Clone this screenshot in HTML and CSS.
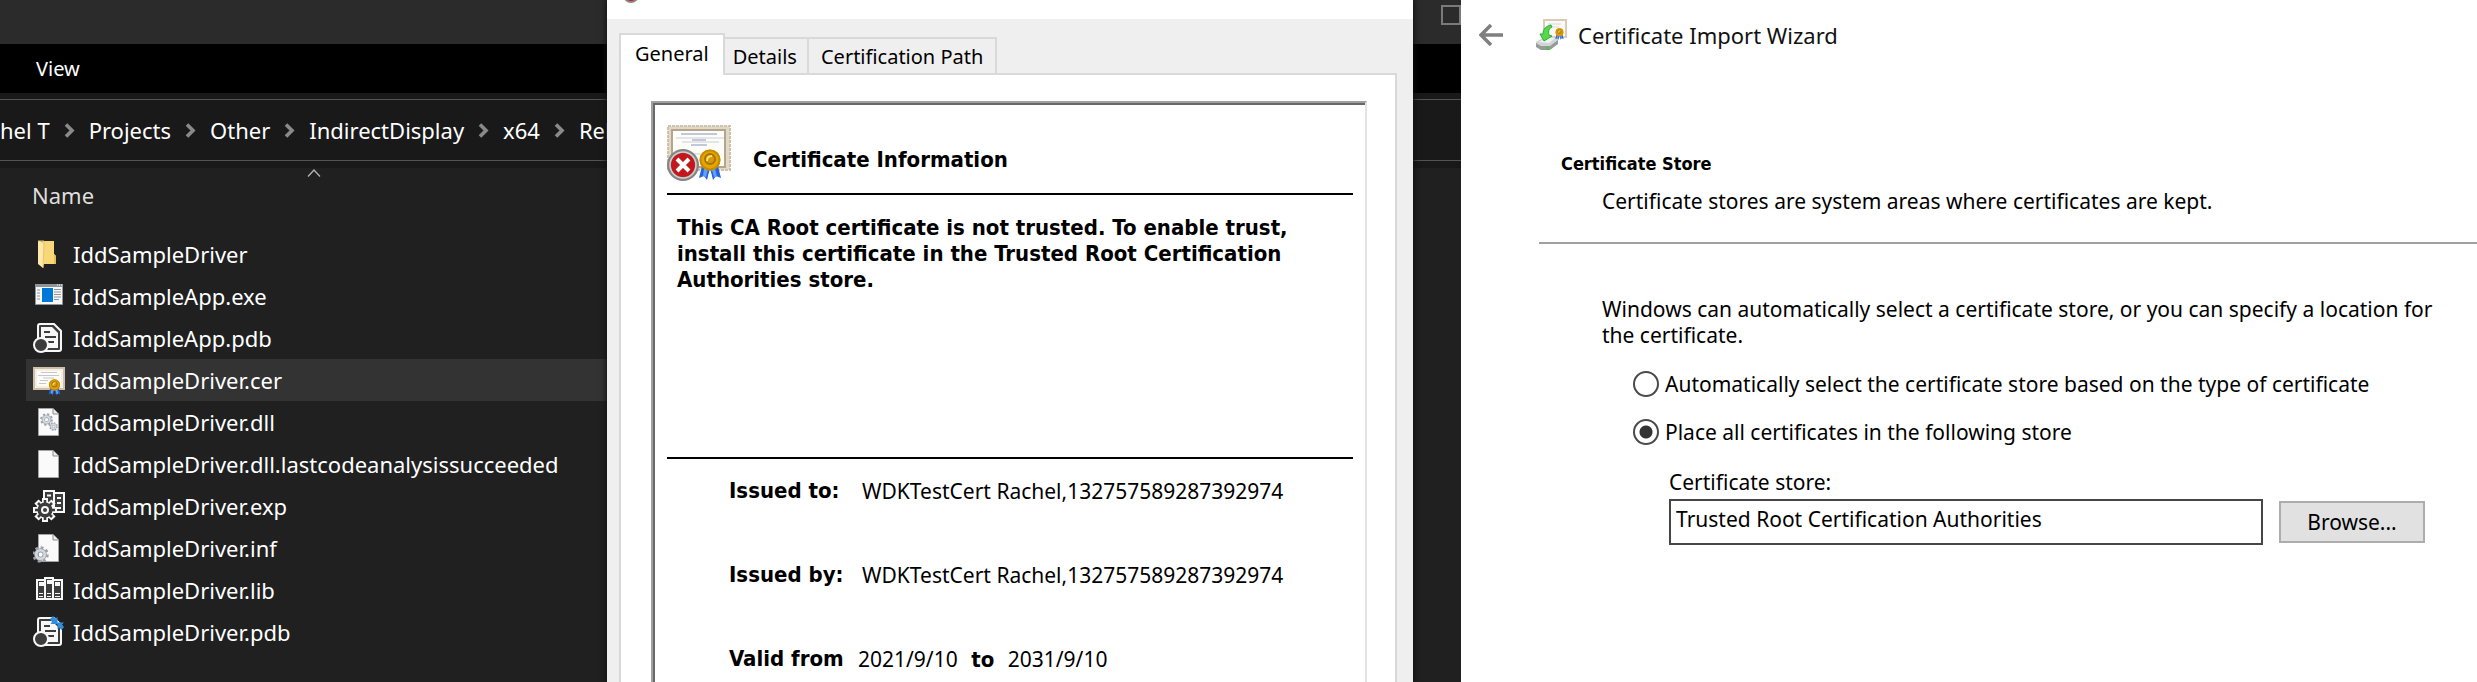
FILE: index.html
```html
<!DOCTYPE html>
<html lang="en">
<head>
<meta charset="utf-8">
<title>Certificate Import Wizard</title>
<link rel="stylesheet" href="styles.css">
</head>
<body>
<svg class="defs" aria-hidden="true">
  <defs>
    <symbol id="chevron" viewBox="0 0 11 15"><path d="M2 1.500l6 6-6 6" fill="none" stroke="#8a8a8a" stroke-width="3.600"/></symbol>
    <symbol id="ribbon-seal" viewBox="0 0 24 32">
      <path d="M4 17L1 29l5-2 3 4 3-12zM20 17l3 12-5-2-3 4-3-12z" fill="#2363dc"/>
      <path d="M6 20l-1 7 3 1 2-8zM17 19l2 9-3 0-2-7z" fill="#62a0f5"/>
      <circle cx="12" cy="11" r="10.500" fill="#e3a500"/>
      <circle cx="12" cy="11" r="9.500" fill="none" stroke="#c98a00" stroke-width="2"/>
      <circle cx="12" cy="10" r="5" fill="#d59a0c" stroke="#a87408" stroke-width="2"/>
      <path d="M9 12c0-3 2-5 5-5" fill="none" stroke="#ffdf70" stroke-width="2"/>
    </symbol>
    <symbol id="page" viewBox="0 0 32 32">
      <path d="M5.500 2.500H20l5.500 5.500v21.500h-20z" fill="#fafafa" stroke="#a3a3a3"/>
      <path d="M20 2.500V8h5.500" fill="#ededed" stroke="#8d8d8d"/>
    </symbol>
    <symbol id="cog" viewBox="0 0 20 20">
      <circle cx="10" cy="10" r="8" fill="none" stroke="#9ba2aa" stroke-width="3.500" stroke-dasharray="3.140 3.143"/>
      <circle cx="10" cy="10" r="5" fill="none" stroke="#9ba2aa" stroke-width="5"/>
      <circle cx="10" cy="10" r="5" fill="none" stroke="#d4d9e0" stroke-width="3"/>
    </symbol>
    <symbol id="pdb" viewBox="0 0 32 32">
      <path d="M7 2h14l7 7v18a2 2 0 0 1-2 2H5V4a2 2 0 0 1 2-2z" fill="#3c3c3c" stroke="#f7f7f7" stroke-width="2"/>
      <path d="M8 5h11l6 6v15H8z" fill="#f7f7f7"/>
      <path d="M11 10h6M12 15h11M15 20h6" stroke="#3c3c3c" stroke-width="2"/>
      <circle cx="8" cy="23" r="7" fill="#3c3c3c" stroke="#f7f7f7" stroke-width="2"/>
    </symbol>
  </defs>
</svg>

<main class="desktop">
  <section class="explorer" aria-label="File explorer">
    <header class="explorer-title">
      <div class="caption-box"><button class="maximize" type="button" aria-label="Maximize"></button></div>
    </header>
    <div class="menu"><button class="menu-item" type="button">View</button></div>
    <nav class="address" aria-label="Address">
      <a href="#">hel T</a><svg class="chevron"><use href="#chevron"/></svg>
      <a href="#">Projects</a><svg class="chevron"><use href="#chevron"/></svg>
      <a href="#">Other</a><svg class="chevron"><use href="#chevron"/></svg>
      <a href="#">IndirectDisplay</a><svg class="chevron"><use href="#chevron"/></svg>
      <a href="#">x64</a><svg class="chevron"><use href="#chevron"/></svg>
      <a href="#">Release</a>
    </nav>
    <div class="list-head">
      <svg class="sort" viewBox="0 0 14 8"><path d="M1 7.500L7 1l6 6.500" fill="none" stroke="#b4b4b4" stroke-width="1.300"/></svg>
      <span>Name</span>
    </div>
    <ul class="files">
      <li><svg viewBox="0 0 32 32"><path d="M9 3h12v13l2 2v8H10z" fill="#f7d778"/><path d="M21 16l2 2v8h-2z" fill="#e5bd55"/><path d="M5 3h3l3 4v18l-1 5-5-4z" fill="#ffe9a9"/><path d="M5 3h6v3l-1 24" fill="none" stroke="#e8c46a"/></svg>IddSampleDriver</li>
      <li><svg viewBox="0 0 32 32"><path d="M2.500 4.500h27v20h-27z" fill="#f7f7f7" stroke="#8d949a"/><path d="M2 4h28v3H2z" fill="#8d949a"/><path d="M24 5h1M26 5h1M28 5h1" stroke="#fff"/><path d="M9 8h11v14H9z" fill="#0078d7"/><path d="M4 10h3M4 13h3M4 16h3M4 19h3M21 9.500h7M21 12h7M21 14.500h7M21 17h7M21 19.500h5" stroke="#8d949a"/></svg>IddSampleApp.exe</li>
      <li><svg><use href="#pdb"/></svg>IddSampleApp.pdb</li>
      <li class="selected"><svg viewBox="0 0 32 32"><path d="M1 4h30v21H1z" fill="#fdfcf7" stroke="#cdbfa8" stroke-width="2"/><path d="M3 6h26v17H3z" fill="none" stroke="#ebe2d2"/><path d="M8 8.500h16M5 11.500h21M10 14h11M7 16.500h8M6 19.500h7" stroke="#c3c6cf"/><use href="#ribbon-seal" x="15" y="15" width="13" height="17"/></svg>IddSampleDriver.cer</li>
      <li><svg viewBox="0 0 32 32"><use href="#page"/><use href="#cog" x="7" y="7" width="13" height="13"/><use href="#cog" x="16" y="16" width="9" height="9"/></svg>IddSampleDriver.dll</li>
      <li><svg><use href="#page"/></svg>IddSampleDriver.dll.lastcodeanalysissucceeded</li>
      <li><svg viewBox="0 0 32 32"><path d="M11 1h10v20H11zM21 3h10v19H21z" fill="#3c3c3c" stroke="#f7f7f7" stroke-width="2"/><path d="M14 5.500h4M24 8h4M24 13h4M24 18h4" stroke="#f7f7f7" stroke-width="2"/>
        <circle cx="12" cy="20" r="9" fill="#f7f7f7"/><path d="M12 8v24M0 20h24M3.500 11.500l17 17M20.500 11.500l-17 17" stroke="#f7f7f7" stroke-width="6"/>
        <circle cx="12" cy="20" r="7.500" fill="#3c3c3c"/><path d="M12 10v20M2 20h20M5 13l14 14M19 13L5 27" stroke="#3c3c3c" stroke-width="2.500"/>
        <circle cx="12" cy="20" r="3" fill="#3c3c3c" stroke="#f7f7f7" stroke-width="2"/></svg>IddSampleDriver.exp</li>
      <li><svg viewBox="0 0 32 32"><use href="#page"/><use href="#cog" x="-1" y="14" width="17" height="17"/></svg>IddSampleDriver.inf</li>
      <li><svg viewBox="0 0 32 32"><path d="M4 6h8v19H4zM12 4h8v21h-8zM20 6h9v19h-9z" fill="#3c3c3c" stroke="#f7f7f7" stroke-width="2"/><path d="M6 10h5M14 8h5M22 10h5" stroke="#f7f7f7" stroke-width="4"/><path d="M6 19.500h4M14 19.500h4M22 19.500h5M6 22.500h4M14 22.500h4M22 22.500h5" stroke="#f7f7f7"/></svg>IddSampleDriver.lib</li>
      <li><svg viewBox="0 0 32 32"><use href="#pdb"/><path d="M17 3l3-3 2.500 2.500L24.500 1v7h-7L19 6zM24.500 6.500H31L29 8.500l2 2.500-2.500 3-2.500-2.500-1.500 1.500z" fill="#2f8ede"/></svg>IddSampleDriver.pdb</li>
    </ul>
  </section>

  <section class="cert" aria-label="Certificate">
    <header class="cert-title"><span class="title-icon"></span></header>
    <div class="cert-body">
      <div class="tabs" role="tablist">
        <button class="tab active" type="button" role="tab" aria-selected="true">General</button>
        <button class="tab" type="button" role="tab">Details</button>
        <button class="tab" type="button" role="tab">Certification Path</button>
      </div>
      <div class="pane">
        <div class="frame">
          <div class="info-head">
            <svg class="cert-icon" viewBox="0 0 64 56">
              <path d="M1 1h62v44H1z" fill="#e2d8c8" stroke="#cfc2ad" stroke-width="2" stroke-dasharray="3 1"/>
              <path d="M5 5h53v37H5z" fill="#fdfdf8" stroke="#b5a58e" stroke-width="2"/>
              <path d="M14 9h36M25 15h14M24 20h16" stroke="#c2c8dc" stroke-width="2"/>
              <path d="M9 13h48M15 17h37M20 29h32" stroke="#e4e5ea" stroke-width="2"/>
              <use href="#ribbon-seal" x="31" y="24" width="24" height="32"/>
              <circle cx="16" cy="40" r="14" fill="#c5161c" stroke="#858585" stroke-width="4"/>
              <circle cx="16" cy="40" r="13" fill="none" stroke="#cfcfcf" stroke-width="1.500"/>
              <path d="M10 34l12 12M22 34L10 46" stroke="#fff" stroke-width="4"/>
            </svg>
            <h1>Certificate Information</h1>
          </div>
          <p class="trust">This CA Root certificate is not trusted. To enable trust, install this certificate in the Trusted Root Certification Authorities store.</p>
          <dl class="facts">
            <div><dt>Issued to:</dt><dd>WDKTestCert Rachel,132757589287392974</dd></div>
            <div><dt>Issued by:</dt><dd>WDKTestCert Rachel,132757589287392974</dd></div>
            <div><dt>Valid from</dt><dd>2021/9/10 <b>to</b> 2031/9/10</dd></div>
          </dl>
        </div>
      </div>
    </div>
  </section>

  <section class="wizard" aria-label="Certificate Import Wizard">
    <header class="wizard-title">
      <button class="back" type="button" aria-label="Back"><svg viewBox="0 0 24 22"><path d="M2 11h22M12 1L2 11l10 10" fill="none" stroke="#7f7f7f" stroke-width="3.500"/></svg></button>
      <svg class="wizard-icon" viewBox="0 0 32 32">
        <path d="M9 1h22v17H9z" fill="#fbfaf5" stroke="#d8ccb9" stroke-width="2"/>
        <path d="M13 5h13M15 8h9" stroke="#d6d8df"/>
        <path d="M1 23l10-6h14l-3 7-9 6-9-1-3-3z" fill="#d3d5d4"/>
        <path d="M1 24l5 3h9l8-6v4l-8 6H6l-5-3z" fill="#969b99"/>
        <path d="M4 23l8-4h8l-6 5z" fill="#f1f3f2"/>
        <path d="M11 28h3v3h-3z" fill="#46c34a"/>
        <path d="M16 6c-5 1-8 4-8 9H5l4 7 8-5-3-1c-1-4 0-7 3-8z" fill="#54d84e" stroke="#2ead35"/>
        <use href="#ribbon-seal" x="20" y="9" width="9" height="12"/>
      </svg>
      <h2>Certificate Import Wizard</h2>
    </header>
    <div class="step">
      <h3>Certificate Store</h3>
      <p>Certificate stores are system areas where certificates are kept.</p>
    </div>
    <form class="choices">
      <p>Windows can automatically select a certificate store, or you can specify a location for the certificate.</p>
      <label class="option"><input type="radio" name="store"><span>Automatically select the certificate store based on the type of certificate</span></label>
      <label class="option"><input type="radio" name="store" checked><span>Place all certificates in the following store</span></label>
      <div class="store">
        <label for="store-name">Certificate store:</label>
        <div class="store-row">
          <input id="store-name" type="text" value="Trusted Root Certification Authorities">
          <button class="browse" type="button">Browse...</button>
        </div>
      </div>
    </form>
  </section>
</main>
</body>
</html>
```
FILE: styles.css
```css
* { box-sizing: border-box; margin: 0; padding: 0; }

body {
  font: 21px/26px "Noto Sans", "Open Sans", sans-serif;
  color: #000;
  background: #202020;
  overflow: hidden;
}

button, input { font: inherit; color: inherit; border: 0; border-radius: 0; background: none; }
ul { list-style: none; }
.defs { position: absolute; width: 0; height: 0; }

/* Windows overlap on one grid row */
.desktop {
  display: grid;
  grid-template-columns: 607fr 806fr 48fr 1016fr;
  height: 100vh;
  overflow: hidden;
}
.explorer, .cert, .wizard { grid-row: 1; min-width: 0; min-height: 0; }
.explorer { grid-column: 1 / -1; }
.cert { grid-column: 2; }
.wizard { grid-column: 4; }

/* Explorer */
.explorer { background: #202020; color: #fff; font-size: 22px; line-height: 42px; }
.explorer-title {
  display: grid;
  grid-template-columns: 1413fr 48fr 1016fr;
  height: 44px;
  background: #2b2b2b;
}
.caption-box { grid-column: 2; display: flex; justify-content: flex-end; padding-top: 5px; }
.maximize { width: 20px; height: 20px; border: 2px solid #7a7a7a; }
.menu { display: flex; align-items: center; height: 49px; padding-left: 36px; background: #000; font-size: 20px; }
.address {
  display: flex;
  align-items: center;
  gap: 14px;
  height: 75px;
  border-top: 6px solid #191919;
  border-bottom: 7px solid #191919;
  background: #191919;
  box-shadow: inset 0 1px #535353, inset 0 -1px #535353;
}
.address a { color: inherit; text-decoration: none; }
.chevron { flex: none; width: 11px; height: 15px; }
.list-head { display: flex; flex-direction: column; height: 65px; padding: 1px 0 0 32px; gap: 2px; color: #dedede; line-height: 32px; }
.sort { width: 14px; height: 8px; margin-left: 275px; }
.files { width: 50%; }
.files li { display: flex; align-items: center; gap: 8px; height: 42px; margin-left: 26px; padding-left: 7px; }
.files svg { flex: none; width: 32px; height: 32px; }
.files .selected { background: #333; }

/* Certificate dialog */
.cert { display: flex; flex-direction: column; background: #efefef; box-shadow: 0 0 6px 1px #111; overflow: hidden; }
.cert-title { flex: none; height: 19px; background: #fff; padding-left: 16px; overflow: hidden; }
.title-icon { display: block; width: 16px; height: 16px; margin-top: -13px; border: 2px solid #8a8a8a; border-radius: 50%; background: #d0141a; }
.cert-body { flex: 1; display: flex; flex-direction: column; padding: 14px 16px 0 12px; }
.tabs { display: flex; align-items: flex-end; font-size: 20px; }
.tab { height: 36px; padding: 2px 10px 0 8px; border: 2px solid #d9d9d9; border-bottom: 0; border-left: 0; background: #efefef; }
.tab:last-child { padding: 2px 12px 0 12px; }
.tab.active { height: 42px; margin-bottom: -2px; padding: 0 14px 2px 14px; border-left: 2px solid #d9d9d9; background: #fff; z-index: 1; }
.pane { flex: 1; padding: 26px 28px 0 30px; border: 2px solid #d9d9d9; border-bottom: 0; background: #fff; }
.frame {
  height: 100%;
  padding: 22px 12px 0 14px;
  border: solid #a0a0a0;
  border-width: 2px 2px 0;
  border-right-color: #e3e3e3;
  box-shadow: inset 2px 2px #696969;
}
.info-head { display: flex; align-items: center; gap: 22px; height: 70px; padding-bottom: 12px; border-bottom: 2px solid #000; }
.cert-icon { flex: none; width: 64px; height: 56px; }
h1, dt, dd b, .trust { font-family: "DejaVu Sans Condensed", "DejaVu Sans", sans-serif; font-size: 22px; font-stretch: condensed; font-weight: 700; }
h1 { padding-top: 14px; }
.trust { min-height: 264px; padding: 20px 50px 0 10px; border-bottom: 2px solid #000; }
.facts { display: grid; gap: 58px; padding: 19px 0 0 62px; }
.facts div { display: flex; }
.facts dt { min-width: 133px; }
.facts div:last-child dt { min-width: 129px; }
.facts b { margin: 0 8px; }

/* Import wizard */
.wizard { background: #fff; }
.wizard-title { display: flex; align-items: center; height: 70px; padding-left: 18px; }
.back { width: 24px; height: 22px; }
.back svg { display: block; width: 24px; height: 22px; }
.wizard-icon { width: 32px; height: 32px; margin: 0 11px 0 32px; }
h2 { font-size: 22px; font-weight: 400; color: #111; }
.step { margin-left: 78px; padding: 81px 0 28px 22px; border-bottom: 2px solid #a0a0a0; }
h3 { font: 700 18px/26px "DejaVu Sans Condensed", "DejaVu Sans", sans-serif; font-stretch: condensed; }
.step p { padding: 11px 0 0 41px; }
.choices { display: flex; flex-direction: column; padding: 52px 40px 0 141px; }
.option { display: flex; align-items: center; gap: 6px; height: 26px; margin: 22px 0 0 31px; }
.choices p + .option { margin-top: 23px; }
.option input {
  appearance: none;
  flex: none;
  width: 26px;
  height: 26px;
  border: 2px solid #4a4a4a;
  border-radius: 50%;
}
.option input:checked { background: radial-gradient(circle, #333 6px, #fff 7px); }
.store { margin: 24px 12px 0 67px; }
.store label { display: block; }
.store-row { display: flex; align-items: center; gap: 16px; margin-top: 4px; }
.store-row input { flex: 1; min-width: 0; height: 46px; padding: 0 5px 6px; border: 2px solid #464646; background: #fff; }
.browse { width: 146px; height: 42px; border: 2px solid #adadad; background: #e1e1e1; }
```
